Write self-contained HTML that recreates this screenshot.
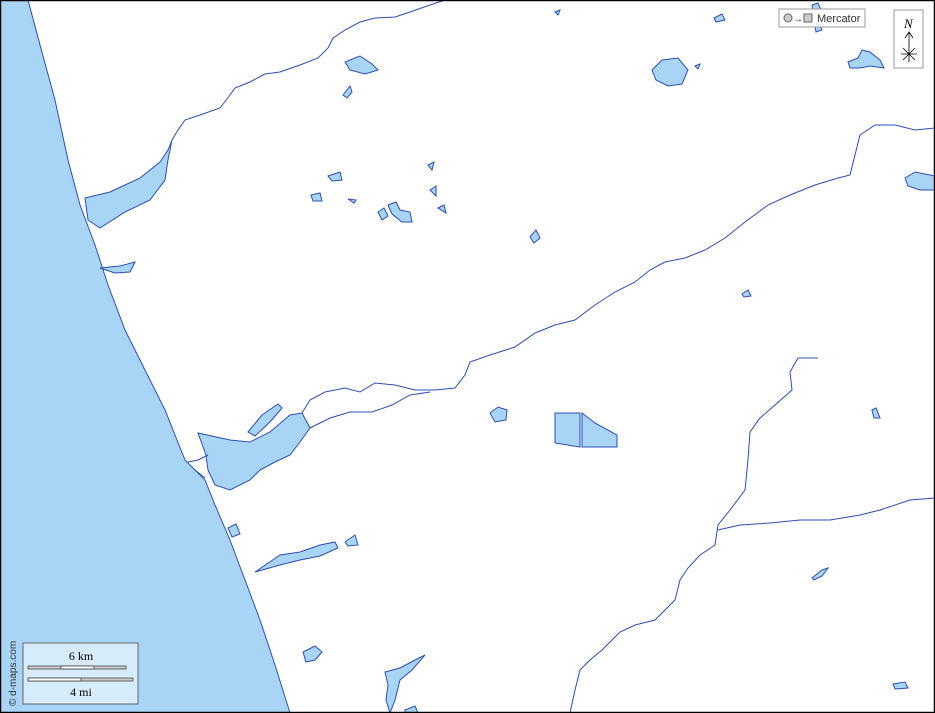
<!DOCTYPE html>
<html><head><meta charset="utf-8"><style>
html,body{margin:0;padding:0;background:#fff;}
svg{display:block;}
</style></head><body>
<svg width="935" height="713" viewBox="0 0 935 713" xmlns="http://www.w3.org/2000/svg">
<rect x="0" y="0" width="935" height="713" fill="#fff"/>
<g fill="#a8d5f6" stroke="#2a4fb8" stroke-width="1">
<path d="M0,0 L28,0 L40,45 L55,100 L68,160 L80,205 L95,245 L108,285 L125,330 L145,370 L165,410 L185,460 L205,480 L215,505 L230,540 L245,580 L260,620 L275,665 L290,713 L0,713 Z"/>
<path d="M85,198 L110,192 L140,178 L160,162 L168,150 L172,140 L168,160 L165,180 L150,200 L125,212 L100,228 L88,220 Z"/>
<path d="M100,268 L120,266 L135,262 L130,272 L115,273 Z"/>
<path d="M198,433 L230,440 L250,442 L270,432 L290,415 L302,413 L310,428 L300,442 L290,455 L275,462 L260,470 L250,480 L230,490 L215,485 L208,470 L206,455 Z"/>
<path d="M248,432 L262,415 L278,404 L282,408 L270,422 L255,436 Z"/>
<path d="M228,528 L236,524 L240,534 L232,537 Z"/>
<path d="M255,572 L280,555 L300,552 L320,545 L335,542 L338,548 L320,556 L300,560 L280,565 Z"/>
<path d="M345,542 L355,535 L358,545 L348,546 Z"/>
<path d="M303,652 L315,646 L322,652 L315,660 L306,662 Z"/>
<path d="M385,672 L400,668 L415,660 L425,655 L412,670 L400,680 L395,700 L390,713 L386,700 L388,685 Z"/>
<path d="M345,62 L360,56 L372,64 L378,70 L365,74 L350,70 Z"/>
<path d="M343,95 L350,86 L352,92 L347,98 Z"/>
<path d="M652,70 L662,60 L678,58 L688,70 L682,84 L668,86 L656,80 Z"/>
<path d="M695,66 L700,64 L698,69 Z"/>
<path d="M714,18 L722,14 L725,20 L716,22 Z"/>
<path d="M555,12 L560,10 L558,15 Z"/>
<path d="M812,5 L818,3 L822,12 L818,22 L822,30 L816,32 L814,20 Z"/>
<path d="M848,62 L858,58 L862,50 L870,52 L880,60 L884,68 L870,66 L860,68 L850,68 Z"/>
<path d="M905,178 L915,172 L935,176 L935,190 L920,190 L908,186 Z"/>
<path d="M328,176 L340,172 L342,180 L332,181 Z"/>
<path d="M311,195 L320,193 L322,201 L313,201 Z"/>
<path d="M348,199 L356,200 L354,203 Z"/>
<path d="M378,212 L384,208 L388,216 L382,220 Z"/>
<path d="M388,205 L396,202 L400,210 L410,212 L412,222 L402,222 L392,214 Z"/>
<path d="M428,165 L434,162 L432,170 Z"/>
<path d="M430,190 L436,186 L436,196 Z"/>
<path d="M438,208 L444,205 L446,213 Z"/>
<path d="M530,237 L536,230 L540,238 L534,243 Z"/>
<path d="M742,294 L748,290 L751,296 L744,297 Z"/>
<path d="M490,413 L498,407 L507,410 L506,420 L495,422 Z"/>
<path d="M555,413 L580,413 L580,447 L555,443 Z"/>
<path d="M582,413 L595,423 L617,435 L617,447 L582,447 Z"/>
<path d="M872,410 L876,408 L880,418 L874,418 Z"/>
<path d="M812,578 L822,570 L828,568 L822,576 L814,580 Z"/>
<path d="M893,684 L905,682 L908,688 L895,689 Z"/>
<path d="M405,710 L415,706 L418,713 L405,713 Z"/>
</g>
<g fill="none" stroke="#2a4fb8" stroke-width="1">
<path d="M172,140 L178,130 L185,120 L200,115 L220,108 L230,95 L235,88 L250,82 L265,74 L280,72 L300,65 L318,58 L328,48 L333,38 L345,30 L360,22 L375,18 L395,17 L410,12 L430,5 L445,0"/>
<path d="M302,413 L310,400 L325,392 L345,388 L360,392 L375,383 L395,385 L415,390 L435,390 L455,388 L465,375 L470,362 L490,355 L515,347 L535,333 L555,325 L575,320 L595,305 L615,292 L635,282 L650,270 L665,262 L685,258 L705,250 L725,238 L745,222 L768,205 L790,195 L815,185 L838,178 L850,175 L855,155 L860,135 L875,125 L895,125 L915,130 L935,128"/>
<path d="M310,428 L330,418 L350,412 L372,412 L392,405 L410,395 L430,392"/>
<path d="M818,358 L798,358 L790,372 L792,390 L775,405 L760,418 L750,432 L748,460 L745,490 L730,510 L718,525 L715,545 L700,555 L688,568 L680,580 L675,600 L665,610 L655,620 L635,625 L620,632 L602,650 L590,660 L580,670 L575,690 L570,713"/>
<path d="M718,530 L740,525 L770,523 L800,520 L830,520 L860,515 L880,510 L910,500 L935,498"/>
<path d="M188,462 L198,460 L208,455"/>
<path d="M195,470 L205,478"/>
</g>
<rect x="0.5" y="0.5" width="934" height="712" fill="none" stroke="#000" stroke-width="1.5"/>
<rect x="779" y="9" width="86" height="18" fill="#fff" stroke="#999" stroke-width="1"/>
<circle cx="788" cy="18" r="4" fill="#ccc" stroke="#666"/>
<text x="793" y="22" font-family="Liberation Sans, sans-serif" font-size="10" fill="#333">→</text>
<rect x="804" y="14" width="8" height="8" fill="#ccc" stroke="#666"/>
<text x="817" y="22" font-family="Liberation Sans, sans-serif" font-size="11" fill="#333">Mercator</text>
<rect x="894" y="10" width="29" height="58" fill="#fff" stroke="#999"/>
<text x="904" y="28" font-family="Liberation Serif, serif" font-style="italic" font-size="13" fill="#000">N</text>
<path d="M909,32 L909,62 M905,38 L909,32 L913,38 M901,54 L917,54 M903,48 L915,60 M915,48 L903,60" stroke="#000" stroke-width="0.8" fill="none"/>
<rect x="23" y="643" width="115" height="61" fill="#d6ecfb" stroke="#666"/>
<text x="81" y="660" text-anchor="middle" font-family="Liberation Serif, serif" font-size="12" fill="#000">6 km</text>
<rect x="28" y="666" width="98" height="3" fill="#ccc" stroke="#333" stroke-width="0.7"/>
<rect x="61" y="666" width="33" height="3" fill="#fff" stroke="#333" stroke-width="0.7"/>
<rect x="28" y="678" width="105" height="3" fill="#ccc" stroke="#333" stroke-width="0.7"/>
<rect x="28" y="678" width="53" height="3" fill="#fff" stroke="#333" stroke-width="0.7"/>
<text x="81" y="696" text-anchor="middle" font-family="Liberation Serif, serif" font-size="12" fill="#000">4 mi</text>
<text transform="translate(16,706) rotate(-90)" font-family="Liberation Sans, sans-serif" font-size="10" fill="#333">© d-maps.com</text>
</svg>
</body></html>
